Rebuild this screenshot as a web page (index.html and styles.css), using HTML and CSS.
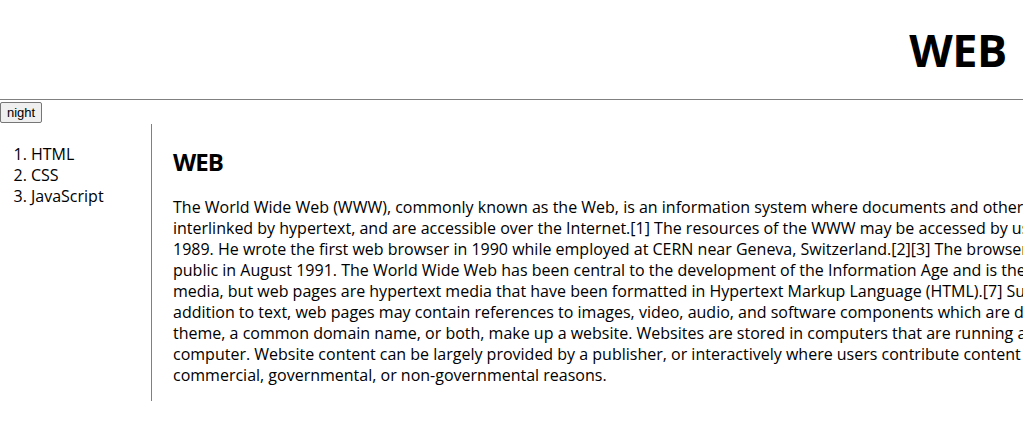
FILE: index.html
```html
<!DOCTYPE html>
<html>
<head>
<meta charset="utf-8">
<title>WEB</title>
<link rel="stylesheet" href="styles.css">
</head>
<body>
<div class="page">
  <h1 class="title">WEB</h1>
  <div class="toolbar"><input type="button" class="night" value="night"></div>
  <div class="grid">
    <ol class="nav">
      <li>HTML</li>
      <li>CSS</li>
      <li>JavaScript</li>
    </ol>
    <div class="article">
      <h2 class="heading">WEB</h2>
      <p class="text">The World Wide Web (WWW), commonly known as the Web, is an information system where documents and other web resources are identified by Uniform Resource Locators (URLs, such as https://example.com/), which may be<br>interlinked by hypertext, and are accessible over the Internet.[1] The resources of the WWW may be accessed by users by a software application called a web browser and are published by a software application called a web server. English scientist Tim Berners-Lee invented the World Wide Web in<br>1989. He wrote the first web browser in 1990 while employed at CERN near Geneva, Switzerland.[2][3] The browser was released outside CERN to other research institutions starting in January 1991 and then to the general<br>public in August 1991. The World Wide Web has been central to the development of the Information Age and is the primary tool billions of people use to interact on the Internet.[4][5][6] Web resources may be any type of downloaded<br>media, but web pages are hypertext media that have been formatted in Hypertext Markup Language (HTML).[7] Such formatting allows for embedded hyperlinks that contain URLs and permit users to navigate to other web resources. In<br>addition to text, web pages may contain references to images, video, audio, and software components which are displayed in the user's web browser as coherent pages of multimedia content. Multiple web resources with a common<br>theme, a common domain name, or both, make up a website. Websites are stored in computers that are running a web server, which is a program that responds to requests made over the Internet from web browsers running on a user's<br>computer. Website content can be largely provided by a publisher, or interactively where users contribute content or the content depends on the users or their actions. Websites may be maintained for a variety of<br>commercial, governmental, or non-governmental reasons.</p>
    </div>
  </div>
</div>
</body>
</html>
```

FILE: styles.css
```css
html {
  overflow: hidden;
}
body {
  margin: 0;
  font-family: "Open Sans", "Noto Sans CJK KR", sans-serif;
  color: #000;
  background: #fff;
}
.page {
  width: 1916px;
}
.title {
  margin: 0;
  padding: 20px 0;
  font-size: 45px;
  line-height: 59px;
  font-weight: 700;
  text-align: center;
  letter-spacing: -0.5px;
  border-bottom: 1px solid #808080;
}
.toolbar {
  padding-top: 2px;
  height: 22px;
}
.night {
  display: block;
  margin: 0;
  height: 21px;
  padding: 0 6px;
  font: 13px "Liberation Sans", Arial, sans-serif;
  color: #000;
  background: #efefef;
  border: 1px solid #767676;
  border-radius: 2px;
}
.grid {
  display: grid;
  grid-template-columns: 152px 1fr;
}
.nav {
  margin: 0;
  padding: 20px 0 0 31px;
  border-right: 1px solid #808080;
  font-size: 16px;
  line-height: 21px;
}
.article {
  padding-left: 21px;
}
.heading {
  margin: 22px 0 0;
  font-size: 24px;
  line-height: 32px;
  font-weight: 700;
  letter-spacing: -1px;
}
.text {
  margin: 19px 0 15px;
  font-size: 16px;
  line-height: 21px;
  white-space: nowrap;
}
```
